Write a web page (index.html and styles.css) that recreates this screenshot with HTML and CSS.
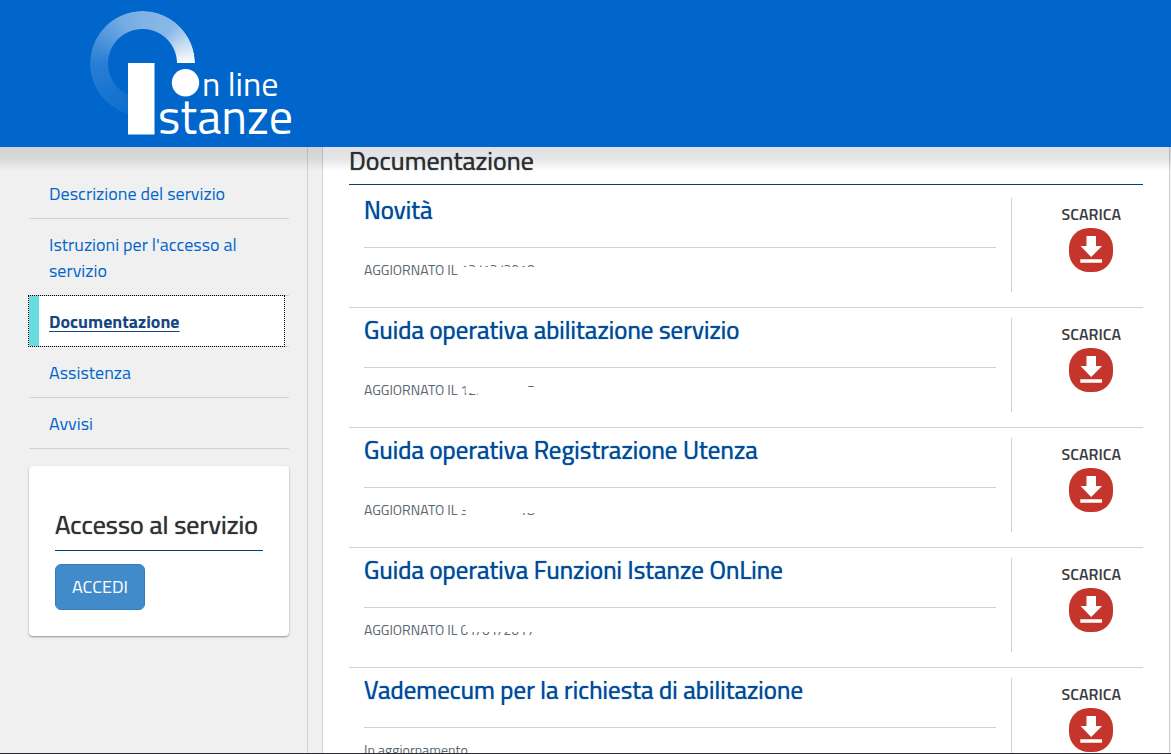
FILE: index.html
```html
<!DOCTYPE html>
<html lang="it">
<head>
<meta charset="utf-8">
<title>Istanze OnLine - Documentazione</title>
<link rel="stylesheet" href="styles.css">
</head>
<body>
<header class="header">
  <a class="logo" href="#" aria-label="Istanze On Line">
    <span class="logo-ring"></span>
    <svg class="logo-mark" width="210" height="147" viewBox="0 0 210 147" role="img" aria-label="Istanze On Line">
      <rect x="38" y="63" width="26.5" height="71.500" fill="#fff"/>
      <circle cx="95.500" cy="82.800" r="13.700" fill="#fff"/>
      <text class="logo-small" x="112" y="96">n line</text>
      <text class="logo-large" x="68" y="134">stanze</text>
    </svg>
  </a>
</header>
<div class="page">
  <aside class="sidebar">
    <nav>
      <ul class="menu">
        <li><a href="#">Descrizione del servizio</a></li>
        <li><a href="#">Istruzioni per l'accesso al servizio</a></li>
        <li><a class="active" href="#">Documentazione</a></li>
        <li><a href="#">Assistenza</a></li>
        <li><a href="#">Avvisi</a></li>
      </ul>
    </nav>
    <section class="card">
      <h2>Accesso al servizio</h2>
      <button class="login" type="button">ACCEDI</button>
    </section>
  </aside>
  <main class="content">
    <h1>Documentazione</h1>
    <article class="doc">
      <div class="doc-text"><h3><a href="#">Novità</a></h3><p>AGGIORNATO IL <span class="date top">12/12/2018</span></p></div>
      <a class="download" href="#"><span>SCARICA</span><svg width="44" height="44" viewBox="0 0 44 44"><rect width="44" height="44" rx="20" fill="#c5352b"/><path d="M17.500 8h9.500v10h6L22.200 29 11.500 18h6zM11.300 31.300h21.700v3.400H11.300z" fill="#fff"/></svg></a>
    </article>
    <article class="doc">
      <div class="doc-text"><h3><a href="#">Guida operativa abilitazione servizio</a></h3><p>AGGIORNATO IL <span class="date ends">12/12/2015</span></p></div>
      <a class="download" href="#"><span>SCARICA</span><svg width="44" height="44" viewBox="0 0 44 44"><rect width="44" height="44" rx="20" fill="#c5352b"/><path d="M17.500 8h9.500v10h6L22.200 29 11.500 18h6zM11.300 31.300h21.700v3.400H11.300z" fill="#fff"/></svg></a>
    </article>
    <article class="doc">
      <div class="doc-text"><h3><a href="#">Guida operativa Registrazione Utenza</a></h3><p>AGGIORNATO IL <span class="date tails">31/12/2018</span></p></div>
      <a class="download" href="#"><span>SCARICA</span><svg width="44" height="44" viewBox="0 0 44 44"><rect width="44" height="44" rx="20" fill="#c5352b"/><path d="M17.500 8h9.500v10h6L22.200 29 11.500 18h6zM11.300 31.300h21.700v3.400H11.300z" fill="#fff"/></svg></a>
    </article>
    <article class="doc">
      <div class="doc-text"><h3><a href="#">Guida operativa Funzioni Istanze OnLine</a></h3><p>AGGIORNATO IL <span class="date low">01/01/2017</span></p></div>
      <a class="download" href="#"><span>SCARICA</span><svg width="44" height="44" viewBox="0 0 44 44"><rect width="44" height="44" rx="20" fill="#c5352b"/><path d="M17.500 8h9.500v10h6L22.200 29 11.500 18h6zM11.300 31.300h21.700v3.400H11.300z" fill="#fff"/></svg></a>
    </article>
    <article class="doc">
      <div class="doc-text"><h3><a href="#">Vademecum per la richiesta di abilitazione</a></h3><p>In aggiornamento</p></div>
      <a class="download" href="#"><span>SCARICA</span><svg width="44" height="44" viewBox="0 0 44 44"><rect width="44" height="44" rx="20" fill="#c5352b"/><path d="M17.500 8h9.500v10h6L22.200 29 11.500 18h6zM11.300 31.300h21.700v3.400H11.300z" fill="#fff"/></svg></a>
    </article>
  </main>
</div>
</body>
</html>
```
FILE: styles.css
```css
* { box-sizing: border-box; }
body {
  margin: 0;
  height: 100vh;
  overflow: hidden;
  display: flex;
  flex-direction: column;
  background: #f0f0f0;
  border-bottom: 1px solid #2b2b30;
  font-family: "Titillium Web", Roboto, "Open Sans", sans-serif;
  color: #2f3033;
}
h1, h2, h3, p, ul { margin: 0; padding: 0; }
h1, h2, h3 { font-weight: 400; text-shadow: 0 0 1px currentColor; }
a { color: #0066cc; text-decoration: none; }

.header {
  position: relative;
  z-index: 2;
  flex: none;
  height: 147px;
  padding-left: 90px;
  background: #0066cc;
}
.header::after {
  content: "";
  position: absolute;
  top: 100%;
  left: 0;
  right: 0;
  height: 24px;
  background: linear-gradient(rgba(0, 0, 30, .12), rgba(0, 0, 30, .1) 45%, rgba(0, 0, 30, 0));
  pointer-events: none;
}
.logo { display: block; position: relative; width: 210px; height: 147px; }
.logo-ring {
  position: absolute;
  left: 0;
  top: 11px;
  width: 105px;
  height: 105px;
  border-radius: 50%;
  background: conic-gradient(rgba(255, 255, 255, .5) 0deg, rgba(255, 255, 255, .54) 40deg, #fff 90deg, transparent 90deg, transparent 195deg, rgba(255, 255, 255, .05) 196deg, rgba(255, 255, 255, .16) 270deg, rgba(255, 255, 255, .46) 335deg, rgba(255, 255, 255, .5) 360deg);
  -webkit-mask: radial-gradient(circle, transparent 34px, #000 35px);
  mask: radial-gradient(circle, transparent 34px, #000 35px);
}
.logo-mark { position: relative; display: block; }
.logo-mark text { fill: #fff; }
.logo-small { font-size: 34px; }
.logo-large { font-size: 48px; }

.page { flex: 1; min-height: 0; display: flex; overflow: hidden; }
.sidebar {
  flex: none;
  width: 308px;
  padding: 21px 18px 0 29px;
  border-right: 1px solid #d0d1d3;
}
.menu { list-style: none; }
.menu li { border-bottom: 1px solid #d0d1d3; }
.menu a { display: block; padding: 13px 20px 11px; font-size: 18px; line-height: 26px; }
.menu .active {
  margin-right: 5px;
  padding-left: 10px;
  border-left: 10px solid #65dcdf;
  background: #fff;
  outline: 1px dotted #000;
  color: #17457f;
  font-weight: 700;
  text-decoration: underline;
  text-underline-offset: 3px;
}
.card {
  margin-top: 17px;
  padding: 43px 26px 26px;
  background: #fff;
  border-radius: 4px;
  box-shadow: 0 1px 2px rgba(0, 0, 0, .4);
}
.card h2 {
  margin-bottom: 13px;
  padding-bottom: 9px;
  border-bottom: 1px solid #004080;
  font-size: 26px;
  line-height: 32px;
  white-space: nowrap;
}
.login {
  display: block;
  padding: 9px 16px;
  border: 1px solid #357ebd;
  border-radius: 6px;
  background: #428bca;
  color: #fff;
  font-family: inherit;
  font-size: 18px;
  line-height: 26px;
}

.content {
  flex: 1;
  min-width: 0;
  margin: 0 1px 0 14px;
  padding: 0 26px;
  background: #fff;
  border: solid #d0d1d3;
  border-width: 0 1px;
}
.content h1 {
  margin-bottom: 3px;
  padding-bottom: 10px;
  border-bottom: 1px solid #004080;
  font-size: 26px;
  line-height: 27px;
}
.doc {
  display: grid;
  grid-template-columns: 5fr 1fr;
  height: 120px;
  border-bottom: 1px solid #d0d1d3;
}
.doc-text { padding: 6px 15px 0; min-width: 0; }
.doc h3 {
  padding-bottom: 21px;
  border-bottom: 1px solid #d0d1d3;
  font-size: 25px;
  line-height: 32px;
}
.doc h3 a { color: #004a99; }
.doc p { padding-top: 11px; font-size: 14px; line-height: 22px; color: #5b6770; }
.download {
  display: flex;
  flex-direction: column;
  align-items: center;
  margin: 10px 0 15px;
  padding: 5px 0 0 28px;
  border-left: 1px solid #d0d1d3;
  color: #3b3c40;
  font-size: 16px;
  line-height: 22px;
  font-weight: 600;
}
.download svg { margin-top: 3px; flex: none; }

/* Dates that are only partly revealed */
.date { display: inline-block; line-height: 16px; }
.top { clip-path: inset(0 0 11px 0); }
.ends { clip-path: polygon(0 0, 5px 0, 5px 11px, 17px 11px, 17px 16px, 0 16px, 0 0, 66px 0, 80px 0, 80px 5px, 66px 5px, 66px 0); }
.tails { clip-path: polygon(0 8px, 5px 8px, 5px 16px, 60px 16px, 60px 11px, 80px 11px, 80px 16px, 0 16px); }
.low { clip-path: polygon(0 0, 5px 0, 5px 10px, 80px 10px, 80px 16px, 0 16px); }
```
